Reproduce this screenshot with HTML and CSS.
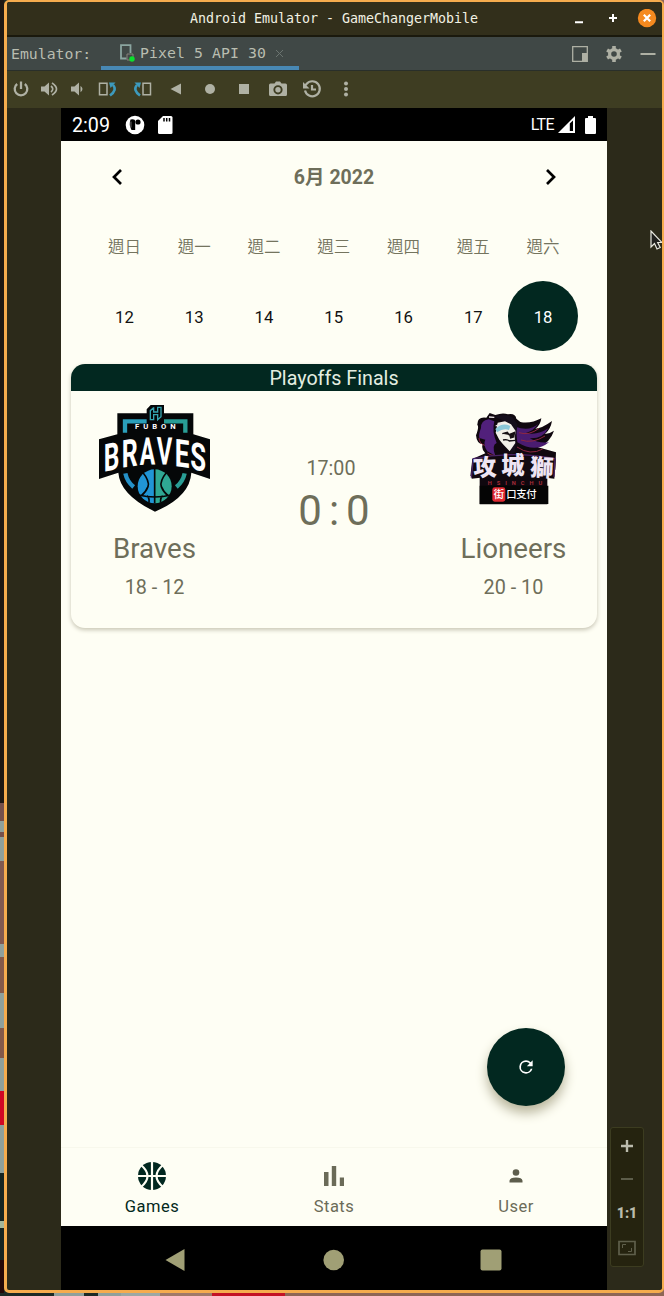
FILE: index.html
```html
<!DOCTYPE html>
<html lang="zh-Hant">
<head>
<meta charset="utf-8">
<title>Android Emulator - GameChangerMobile</title>
<link rel="stylesheet" href="styles.css">
</head>
<body>
<div class="desktop">
  <div class="wallpaper"></div>
  <div class="window">
    <header class="titlebar">
      <span class="title">Android Emulator - GameChangerMobile</span>
      <div class="controls">
        <svg width="34" height="20"><path d="M13 13.3h8" stroke="#fff" stroke-width="2"/></svg>
        <svg width="34" height="20"><path d="M13 9h8M17 5v8" stroke="#fff" stroke-width="2"/></svg>
        <svg width="34" height="20"><circle cx="17" cy="9" r="9.200" fill="#f58a1f"/><path d="M13.800 5.800l6.400 6.400M20.200 5.800l-6.400 6.400" stroke="#fff" stroke-width="2.200"/></svg>
      </div>
    </header>
    <div class="tabs">
      <span class="tabs-label">Emulator:</span>
      <div class="tab">
        <svg width="18" height="20"><path d="M11.500 10V2.200H2V15.500H7.500" fill="none" stroke="#8ba5a0" stroke-width="1.800"/><path d="M8 11h6v6h-6z" fill="none" stroke="#87807c"/><circle cx="13" cy="16" r="2.700" fill="#0be02d"/></svg>
        <span>Pixel 5 API 30</span>
        <svg class="tab-close" width="9" height="9"><path d="M1 1l7 7M8 1l-7 7" stroke="#6b7470"/></svg>
      </div>
      <div class="tab-tools">
        <svg width="34" height="20"><path d="M9.700 2.700h14.600v14.600H9.700z" fill="none" stroke="#aeb0a4" stroke-width="1.300"/><path d="M19 9h5v8.500h-5z" fill="#aeb0a4"/></svg>
        <svg width="34" height="20"><g transform="translate(17 10)"><circle r="4.400" fill="none" stroke="#aeb0a4" stroke-width="3.200"/><path d="M0-8v3M0 8V5M-6.900-4l2.600 1.500M6.900-4L4.300-2.500M-6.900 4l2.600-1.500M6.900 4L4.300 2.500" stroke="#aeb0a4" stroke-width="3.600"/></g></svg>
        <svg width="34" height="20"><path d="M9.500 10h15" stroke="#aeb0a4" stroke-width="2"/></svg>
      </div>
    </div>
    <div class="toolbar">
      <svg class="sm" viewBox="-14 -12 28 24"><path d="M-3.800-5A6.300 6.300 0 1 0 3.800-5M0-7.500V0" fill="none" stroke="#afb1a4" stroke-width="2.300"/></svg>
      <svg class="sm" viewBox="-14 -12 28 24"><path d="M-8-2.500h3.500L0-6.500v13l-4.500-4H-8z" fill="#afb1a4"/><path d="M2-3q3.500 3 0 6M3-6q9 6 0 12" fill="none" stroke="#afb1a4" stroke-width="1.700"/></svg>
      <svg class="sm" viewBox="-14 -12 28 24"><path d="M-6-2.500h3.500L2-6.500v13l-4.500-4H-6z" fill="#afb1a4"/><path d="M3.500-3.300q4 3.300 0 6.600z" fill="#afb1a4"/></svg>
      <svg viewBox="-17 -12 34 24"><path d="M-8.500-5.800h7.500V5.800h-7.500z" fill="none" stroke="#afb1a4" stroke-width="1.500"/><path d="M2 6.500Q9.500 1 5-4" fill="none" stroke="#3d9abd" stroke-width="2.600"/><path d="M1-6.500h6.500L2.500-1z" fill="#3d9abd"/></svg>
      <svg viewBox="-17 -12 34 24"><path d="M1-5.800h7.500V5.800H1z" fill="none" stroke="#afb1a4" stroke-width="1.500"/><path d="M-2 6.500Q-9.500 1-5-4" fill="none" stroke="#3d9abd" stroke-width="2.600"/><path d="M-1-6.500h-6.500L-2.500-1z" fill="#3d9abd"/></svg>
      <svg viewBox="-17 -12 34 24"><path d="M-5.500 0L5-5.500v11z" fill="#afb1a4"/></svg>
      <svg viewBox="-17 -12 34 24"><circle r="5" fill="#afb1a4"/></svg>
      <svg viewBox="-17 -12 34 24"><path d="M-5-5H5V5H-5z" fill="#afb1a4"/></svg>
      <svg viewBox="-17 -12 34 24"><path fill-rule="evenodd" d="M-7.500-5.500h4L-2-7.500h4l1.500 2h4q1.500 0 1.500 1.500v9.500q0 1.500-1.500 1.500h-15Q-9 7-9 5.500V-4q0-1.500 1.500-1.500zM0-3.800a4.600 4.600 0 1 0 0 9.200 4.600 4.600 0 1 0 0-9.200z" fill="#afb1a4"/><circle cy=".8" r="2.700" fill="#afb1a4"/></svg>
      <svg viewBox="-17 -12 34 24"><path d="M-7 1.500A7.500 7.500 0 1 0-5.500-5L-8-2.500M0-4v4.500h4" fill="none" stroke="#afb1a4" stroke-width="2.200"/><path d="M-9-7v6.500h6.500z" fill="#afb1a4"/></svg>
      <svg viewBox="-17 -12 34 24"><g fill="#afb1a4"><circle cy="-5.500" r="2"/><circle r="2"/><circle cy="5.500" r="2"/></g></svg>
    </div>
    <div class="stage">
      <main class="phone">
        <div class="status">
          <span class="clock">2:09</span>
          <svg width="20" height="20"><circle cx="10" cy="10" r="9.300" fill="#fff"/><path d="M5.500 4.500q4.700-1 4.700 2v8.500H6.500q-3-5-1-10.500z" fill="#000"/><path d="M4.800 6.500h2v6h-2z" fill="#fff" opacity=".25"/><circle cx="13" cy="7" r="2.600" fill="#000"/></svg>
          <svg class="sd" width="15" height="18"><path d="M5 0h8q1.500 0 1.500 1.500v15q0 1.500-1.500 1.500H1.500Q0 18 0 16.500V5z" fill="#fff"/><path d="M6 2v3.500M8.700 2v3.500M11.500 2v3.500" stroke="#000" stroke-width="1.500"/></svg>
          <span class="lte">LTE</span>
          <svg class="signal" width="18" height="18"><path d="M0 17L17 0v17z" fill="#fff"/><path d="M11.800 7.500L15 4.500V15h-3.200z" fill="#000"/></svg>
          <svg class="battery" width="11" height="18"><path d="M3 0h5v2h2q1 0 1 1v14q0 1-1 1H1q-1 0-1-1V3q0-1 1-1h2z" fill="#fff"/></svg>
        </div>
        <div class="screen">
          <div class="month">
            <svg width="18" height="20"><path d="M12 3L5 10l7 7" fill="none" stroke="#000" stroke-width="2.700"/></svg>
            <span>6月 2022</span>
            <svg width="18" height="20"><path d="M6 3l7 7-7 7" fill="none" stroke="#000" stroke-width="2.700"/></svg>
          </div>
          <div class="week names"><span>週日</span><span>週一</span><span>週二</span><span>週三</span><span>週四</span><span>週五</span><span>週六</span></div>
          <div class="week dates"><span>12</span><span>13</span><span>14</span><span>15</span><span>16</span><span>17</span><span class="selected">18</span></div>
          <article class="card">
            <h2>Playoffs Finals</h2>
            <div class="match">
              <div class="team">
                <svg class="logo" viewBox="0 0 390 348" width="130" height="116">
                  <path d="M82 40h88V28l12-13h40v25h88v63l50 15v119l-56-19q-4 72-109 117Q90 284 85 218l-58 19V118l55-15z" fill="#050708"/>
                  <path d="M105 98V64h65" fill="none" stroke="#2a9fba" stroke-width="13"/>
                  <path d="M222 64h64v34" fill="none" stroke="#299d95" stroke-width="13"/>
                  <path d="M106 220q5 24 25 41" fill="none" stroke="#2590c8" stroke-width="13"/>
                  <path d="M284 220q-5 24-25 41" fill="none" stroke="#299d95" stroke-width="13"/>
                  <path d="M190 24l-9 8v27h10V44h12v15l10-9V22h-10v14h-12V24z" fill="none" stroke="#35a5b0" stroke-width="4"/>
                  <path d="M194 208a51 51 0 0 0 0 102z" fill="#2195d6"/><path d="M194 208a51 51 0 0 1 0 102z" fill="#2fa894"/>
                  <path d="M194 206v104M146 285q48 12 98 0M157 215q23 29 17 45T153 288M231 215q-23 29-17 45t21 28M177 308q2-14-6-20M212 308q-2-14 6-20" fill="none" stroke="#050708" stroke-width="5"/>
                  <g class="logo-word" fill="#fff">
                    <text class="logo-small" x="135" y="88" textLength="122">FUBON</text>
                    <text transform="translate(41 215) skewY(-11) scale(.64 1)">B</text>
                    <text transform="translate(95 203) skewY(-8) scale(.65 1)">R</text>
                    <text transform="translate(149 195) skewY(-2) scale(.60 1)">A</text>
                    <text transform="translate(200 193) skewY(2) scale(.62 1)">V</text>
                    <text transform="translate(254 198) skewY(8) scale(.68 1)">E</text>
                    <text transform="translate(301 206) skewY(11) scale(.67 1)">S</text>
                  </g>
                </svg>
                <span class="name">Braves</span>
                <span class="record">18 - 12</span>
              </div>
              <div class="score"><span class="time">17:00</span><span class="points">0<i>:</i>0</span></div>
              <div class="team">
                <svg class="logo lion" viewBox="0 0 315 315" width="105" height="105">
                  <path d="M76 38l10-14 17 6q22-8 38-2 22-4 25 13l12 10q31 6 63-11-2 20-18 31 20-1 50-23-4 25-21 39 18-3 27-10-12 37-48 50l54 15-2 52-24 4v100H56v-90l-28 5 6-51 39-17q-13-12-8-27-18-2-20-27 10-26 4-31-1-26 27-22z" fill="#10080f"/>
                  <path d="M83 43q-24 4-23 26-8 20-5 30l18 5q-8 15 6 35l24 13q-12-32 4-38-15-35-7-65z" fill="#51207b"/>
                  <path d="M163 65q42 16 68-8-13 20-36 27 34 8 67-14-16 32-56 30 26 16 58 12-41 33-95 0z" fill="#4a1c70"/>
                  <path d="M174 83q30 10 60-13M180 105q34 12 72-12M168 126q40 27 77 6M54 99q1 17 17 22M79 144q8 8 28 8" fill="none" stroke="#8e2742" stroke-width="3"/>
                  <path d="M100 35q32-12 56 3l13 20-7 82-15 12 10-58-10-39-25-11z" fill="#150e1b"/>
                  <path d="M110 53l22-4 18 9 14 20-3 18 2 18-17 25-20-21-11-14-11-21z" fill="#f2f0e8"/>
                  <path d="M103 72q21-21 45-9l-4 12q-16-7-36 7z" fill="#8bc8d8"/>
                  <path d="M124 86l15-4 6 8M146 88l15-6-3 14-9 3zM126 105q13-3 19 3l18-2" fill="#161014" stroke="#161014" stroke-width="4"/>
                  <path d="M84 36l16 1M104 63l19-8" stroke="#ece5e8" stroke-width="4"/>
                  <path d="M34 161q121-24 250 0l-4 60q-121-19-248 0z" fill="#120910"/>
                  <path d="M31 218l6-57q121-24 245 0l-3 54" fill="none" stroke="#482363" stroke-width="4"/>
                  <g class="lion-word" fill="#eee4f3">
                    <text x="37" y="213" transform="rotate(-3 60 200)">攻</text><text x="121" y="207">城</text><text x="207" y="213" transform="rotate(3 230 200)">獅</text>
                  </g>
                  <text class="small-word" x="80" y="239" textLength="164" fill="#a92c37">HSINCHU</text>
                  <path d="M56 242h206v55H56z" fill="#050505"/><rect x="94" y="247" width="39" height="43" rx="7" fill="#df2932"/>
                  <g class="sponsor" fill="#fff"><text x="98" y="279">街</text><text x="136" y="279" textLength="91">口支付</text></g>
                </svg>
                <span class="name">Lioneers</span>
                <span class="record">20 - 10</span>
              </div>
            </div>
          </article>
          <button class="fab"><svg width="20" height="20" viewBox="0 0 24 24"><path d="M17.650 6.350A7.960 7.960 0 0 0 12 4a8 8 0 1 0 7.730 10h-2.080A6 6 0 1 1 12 6c1.660 0 3.140.69 4.220 1.780L13 11h7V4z" fill="#fff"/></svg></button>
          <nav class="bottom-nav">
            <div class="active"><svg width="30" height="30" viewBox="-15 -15 30 30"><circle r="14" fill="#022820"/><path d="M0-15v30M-15 0h30M-11-11Q2 0-11 11M11-11Q-2 0 11 11" fill="none" stroke="#fefef4" stroke-width="2.200"/></svg><span>Games</span></div>
            <div><svg width="30" height="30" viewBox="-15 -15 30 30"><path d="M-10-4h4.500V10H-10zM-2.200-10h4.400v20h-4.400zM5.800 1.500H10V10H5.800z" fill="#6b6b58"/></svg><span>Stats</span></div>
            <div><svg width="30" height="30" viewBox="-15 -15 30 30"><circle cy="-3.500" r="3.300" fill="#5d5d4c"/><path d="M-6.500 6.500V4.800Q-6 1.500 0 1.500t6.500 3.300v1.700z" fill="#5d5d4c"/></svg><span>User</span></div>
          </nav>
        </div>
        <div class="sysnav">
          <svg viewBox="-12 -12 24 24"><path d="M-9.500 0L9.500-11v22z" fill="#a09f75"/></svg>
          <svg viewBox="-12 -12 24 24"><circle cx=".7" r="10.300" fill="#a09f75"/></svg>
          <svg viewBox="-12 -12 24 24"><rect x="-10.500" y="-10.500" width="21" height="21" rx="2" fill="#a09f75"/></svg>
        </div>
      </main>
      <aside class="zoombar">
        <svg viewBox="-12 -12 24 24"><path d="M-6 0H6M0-6V6" stroke="#bbbbac" stroke-width="2.400"/></svg>
        <svg viewBox="-12 -12 24 24"><path d="M-6 0H6" stroke="#5d5d4a" stroke-width="2"/></svg>
        <span>1:1</span>
        <svg viewBox="-12 -12 24 24"><path d="M-8-5.500H8v13H-8z" fill="none" stroke="#5f5f4b" stroke-width="1.700"/><path d="M-4.500 1v-3.500H-1M4.500 1v3.500H1" fill="none" stroke="#5f5f4b"/></svg>
      </aside>
      <svg class="cursor" width="14" height="21"><path d="M1 1v16l3.500-3.500L7 19l3.200-1.500-2.500-5H12z" fill="#20201d" stroke="#e8e8df" stroke-width="1.200"/></svg>
    </div>
  </div>
</div>
</body>
</html>
```
FILE: styles.css
```css
* { box-sizing: border-box; }
body { margin: 0; font-family: Roboto, "Noto Sans CJK TC", sans-serif; }
svg { display: block; flex: none; }
.desktop { width: 664px; height: 1296px; display: flex; padding-bottom: 3px; overflow: hidden; background: linear-gradient(90deg, #1c2a26 0 50px, #1c2a26 54px, #8fa09c 54px 84px, #1c2a26 84px 98px, #8fa09c 98px 121px, #9ca8a4 121px 160px, #a07a69 160px 212px, #c31225 212px 285px, #8e6656 285px); }
.wallpaper { width: 4px; flex: none; background: linear-gradient(#1d1814 0 803px, #76504c 803px 821px, #8fa09c 821px 832px, #76504c 832px 837px, #8fa09c 837px 861px, #815951 861px 944px, #8fa09c 944px 957px, #84594a 957px 993px, #8fa09c 993px 1028px, #84594a 1028px 1058px, #8fa09c 1058px 1091px, #d10724 1091px 1125px, #8fa09c 1125px 1173px, #152422 1173px 1221px, #a4b69a 1221px 1228px, #152422 1228px 1260px, #240807 1260px); }
.window { flex: 1; border: 3px solid #f5ac4e; border-top-width: 2px; border-right-width: 2px; border-radius: 5px; display: flex; flex-direction: column; background: #2c2a1a; overflow: hidden; }
.titlebar { height: 35px; flex: none; display: grid; grid-template-columns: 1fr auto 1fr; align-items: center; background: #322f1b; border-bottom: 2px solid #1a190d; color: #f2f2e4; }
.title { grid-column: 2; font: 13.300px/20px "DejaVu Sans Mono", monospace; margin-left: -1px; }
.controls { display: flex; justify-content: flex-end; margin-right: -2px; }
.tabs { height: 34px; flex: none; display: flex; align-items: center; background: #404846; border-bottom: 1px solid #292f2a; color: #b9bdb0; font: 14.800px/20px "DejaVu Sans Mono", monospace; }
.tabs-label { width: 94px; padding-left: 4px; }
.tab { width: 198px; height: 33px; display: flex; align-items: center; padding: 3px 0 0 18px; border-bottom: 4px solid #4888b4; }
.tab > span { width: 127px; margin-left: 3px; white-space: nowrap; letter-spacing: .09px; }
.tab-close { margin-left: 8px; }
.tab-tools { display: flex; margin-left: auto; margin-right: -3px; }
.toolbar { height: 37px; flex: none; display: flex; align-items: center; padding-bottom: 2px; background: #3e3d22; }
.toolbar svg { width: 34px; height: 24px; }
.toolbar svg.sm { width: 28px; }
.stage { flex: 1; min-height: 0; position: relative; padding-left: 54px; }
.phone { width: 546px; height: 100%; display: flex; flex-direction: column; background: #fefef4; }
.status { height: 33px; flex: none; display: flex; align-items: center; padding: 0 11px; background: #000; color: #fff; }
.clock { width: 53px; font-size: 19.700px; padding-top: 2px; }
.sd { margin-left: 13px; }
.lte { margin-left: auto; font-size: 16px; letter-spacing: -.6px; }
.signal { margin-left: 4px; }
.battery { margin-left: 9px; }
.screen { flex: 1; min-height: 0; position: relative; display: flex; flex-direction: column; }
.month { height: 71px; flex: none; display: flex; align-items: center; justify-content: space-between; padding: 0 48px; font-size: 19.500px; font-weight: 700; color: #6e6e5a; }
.month span { line-height: 24px; padding-top: 2px; }
.week { height: 70px; flex: none; display: grid; grid-template-columns: repeat(7, 1fr); padding: 0 29px 0 28.500px; align-items: center; text-align: center; }
.names { height: 69px; padding-bottom: 2px; font: 16.500px "Noto Sans CJK TC", sans-serif; font-weight: 350; color: #74745e; }
.dates { font-size: 16.700px; line-height: 20px; color: #111; }
.dates span { padding-top: 3px; }
.dates .selected { height: 70px; padding: 0; line-height: 73px; border-radius: 50%; background: #022820; color: #fff; }
.card { height: 264px; flex: none; margin: 13px 10px 0; border-radius: 14px; overflow: hidden; background: #fefef4; box-shadow: 0 2px 4px #c8c6b5; }
.card h2 { height: 27px; margin: 0; background: #022820; color: #e4eee0; font-size: 19.700px; line-height: 30px; font-weight: 400; text-align: center; }
.match { display: flex; justify-content: space-between; color: #6e6e5a; }
.team { width: 167px; height: 218px; display: flex; flex-direction: column; align-items: center; padding-top: 9px; }
.logo { margin-bottom: auto; }
.lion { margin-top: 5px; }
.name { font-size: 27.700px; line-height: 36px; margin-bottom: 9px; }
.record { font-size: 19.800px; line-height: 24px; margin-bottom: 9px; }
.logo-word { font-family: Roboto, sans-serif; font-size: 115px; font-weight: 700; }
.logo-small { font-size: 23px; }
.lion-word { font: 900 70px "Noto Sans CJK TC", sans-serif; }
.small-word { font: 700 17px Roboto, sans-serif; }
.sponsor { font: 500 31px "Noto Sans CJK TC", sans-serif; }
.score { display: flex; flex-direction: column; align-items: center; padding-top: 66px; }
.time { font-size: 19.700px; line-height: 24px; margin-right: 6px; }
.points { display: flex; gap: 7px; font-size: 42px; line-height: 60px; }
.points i { font-style: normal; font-weight: 400; }
.fab { position: absolute; right: 42px; bottom: 120px; width: 78px; height: 78px; padding: 0; border: 0; border-radius: 50%; display: grid; place-items: center; background: #022820; box-shadow: 0 7px 12px #b8b59c; }
.bottom-nav { height: 79px; flex: none; margin-top: auto; border-top: 1px solid #f8f8ec; display: grid; grid-template-columns: repeat(3, 1fr); padding-top: 13px; font-size: 16.500px; letter-spacing: .5px; color: #6b6b58; }
.bottom-nav div { display: flex; flex-direction: column; align-items: center; gap: 5px; line-height: 22px; }
.bottom-nav .active { color: #022820; }
.sysnav { height: 64px; flex: none; display: flex; align-items: center; justify-content: space-between; padding: 3px 104px 0 102px; background: #000; }
.sysnav svg { width: 24px; height: 24px; }
.zoombar { position: absolute; left: 603px; bottom: 23px; width: 34px; height: 140px; display: flex; flex-direction: column; align-items: center; justify-content: space-between; padding: 6px 0 7px; border: 1px solid #3c3c20; border-radius: 3px; background: #25230f; }
.zoombar svg { width: 24px; height: 24px; }
.zoombar span { color: #bbbbac; font-size: 14px; font-weight: 900; line-height: 26px; }
.cursor { position: absolute; left: 643px; top: 122px; }
```
